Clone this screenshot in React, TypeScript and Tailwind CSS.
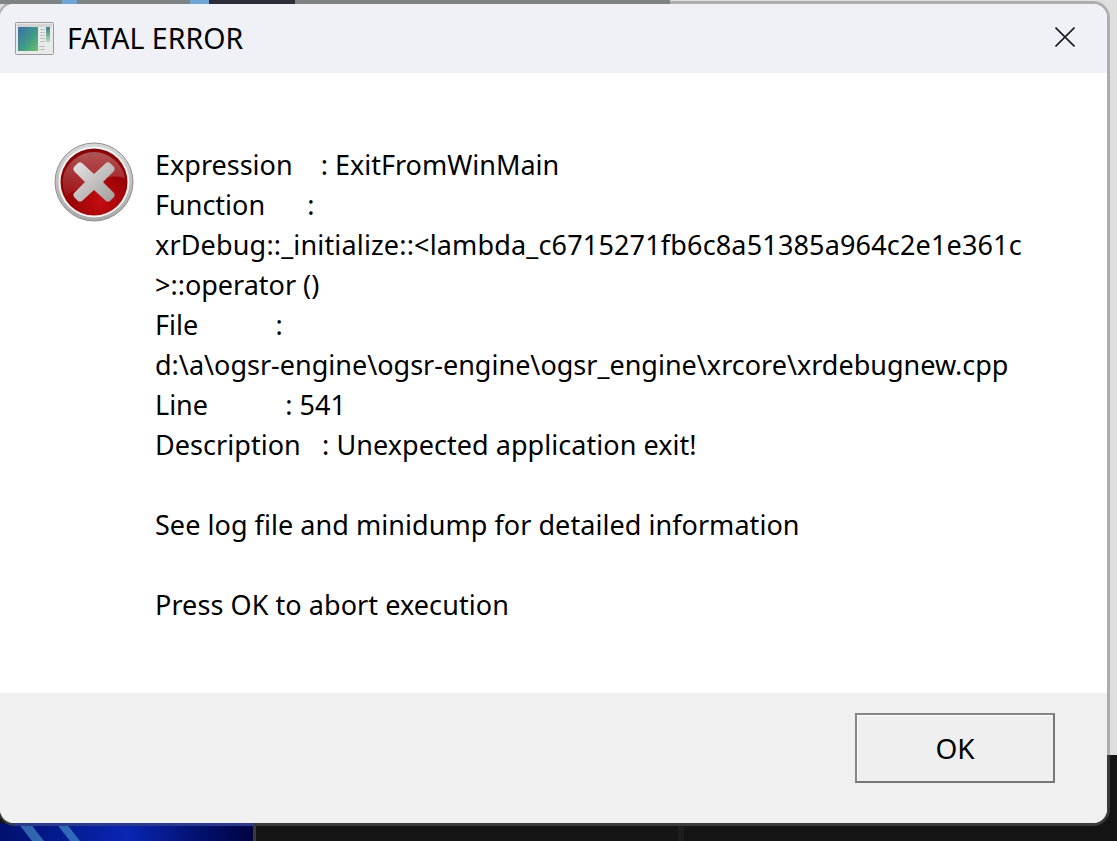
const messageLines = [
  { text: 'Expression    : ExitFromWinMain', className: '' },
  { text: 'Function      :', className: '' },
  { text: 'xrDebug::_initialize::<lambda_c6715271fb6c8a51385a964c2e1e361c', className: 'tracking-[0.16px]' },
  { text: '>::operator ()', className: '' },
  { text: 'File           :', className: '' },
  { text: 'd:\\a\\ogsr-engine\\ogsr-engine\\ogsr_engine\\xrcore\\xrdebugnew.cpp', className: '' },
  { text: 'Line           : 541', className: '' },
  { text: 'Description   : Unexpected application exit!', className: 'tracking-[0.05px]' },
  { text: ' ', className: '' },
  { text: 'See log file and minidump for detailed information', className: 'tracking-[0.05px]' },
  { text: ' ', className: '' },
  { text: 'Press OK to abort execution', className: 'tracking-[0.07px]' },
];

function AppIcon() {
  return (
    <svg width="39" height="33" viewBox="0 0 39 33" className="shrink-0">
      <defs>
        <linearGradient id="pane" x1="0" y1="0" x2="1" y2="1">
          <stop offset="0" stopColor="#3d6ea8" />
          <stop offset="0.55" stopColor="#3f9a88" />
          <stop offset="1" stopColor="#6cc06a" />
        </linearGradient>
        <linearGradient id="strip" x1="0" y1="0" x2="0" y2="1">
          <stop offset="0" stopColor="#3a7a90" />
          <stop offset="1" stopColor="#b4dcb0" />
        </linearGradient>
      </defs>
      <rect x="0.5" y="0.5" width="38" height="32" rx="1" fill="#e9e9e9" stroke="#9a9a9a" />
      <rect x="2" y="2" width="35" height="3" fill="#d2d2d2" />
      <rect x="3" y="5" width="20" height="24" fill="url(#pane)" />
      <rect x="31" y="5" width="4" height="15" fill="url(#strip)" />
      <g fill="#bdbdbd">
        <rect x="25" y="7" width="5" height="1" />
        <rect x="25" y="10" width="5" height="1" />
        <rect x="25" y="13" width="5" height="1" />
        <rect x="25" y="16" width="5" height="1" />
        <rect x="25" y="19" width="5" height="1" />
        <rect x="24" y="24" width="6" height="1" />
        <rect x="24" y="27" width="6" height="1" />
      </g>
    </svg>
  );
}

function ErrorIcon() {
  return (
    <svg width="80" height="80" viewBox="0 0 80 80" className="shrink-0">
      <defs>
        <linearGradient id="ring" x1="0" y1="0" x2="0" y2="1">
          <stop offset="0" stopColor="#d8d8d8" />
          <stop offset="1" stopColor="#a8a8a8" />
        </linearGradient>
        <radialGradient id="disc" cx="0.6" cy="0.8" r="0.8">
          <stop offset="0" stopColor="#c40d10" />
          <stop offset="0.55" stopColor="#9a0307" />
          <stop offset="1" stopColor="#860406" />
        </radialGradient>
        <linearGradient id="shine" x1="0" y1="0" x2="0" y2="1">
          <stop offset="0" stopColor="#ffffff" stopOpacity="0.32" />
          <stop offset="1" stopColor="#ffffff" stopOpacity="0.06" />
        </linearGradient>
        <linearGradient id="cross" x1="0" y1="0" x2="1" y2="1">
          <stop offset="0" stopColor="#e6e3e3" />
          <stop offset="1" stopColor="#a39d9d" />
        </linearGradient>
      </defs>
      <circle cx="40" cy="40" r="39" fill="url(#ring)" stroke="#8e8e8e" strokeWidth="1" />
      <circle cx="40" cy="40" r="35.5" fill="#f4f4f4" />
      <circle cx="40" cy="40" r="33.5" fill="url(#disc)" />
      <path d="M9 36 A31.5 31.5 0 0 1 71 36 C56 30 28 42 12 54 A31.5 31.5 0 0 1 9 36 Z" fill="url(#shine)" />
      <path
        d="M28 21 L40 32 L52 21 Q54 19.5 56 21 L60 25 Q61.5 27 60 29 L49 40 L60 51 Q61.5 53 60 55 L56 59 Q54 60.5 52 59 L40 48 L28 59 Q26 60.5 24 59 L20 55 Q18.5 53 20 51 L31 40 L20 29 Q18.5 27 20 25 L24 21 Q26 19.5 28 21 Z"
        fill="url(#cross)"
      />
    </svg>
  );
}

function Desktop() {
  return (
    <div className="absolute inset-0 flex flex-col">
      <div className="h-[755px] bg-[#dfdfdf]" />
      <div className="flex flex-1 flex-col justify-end bg-[#141414]">
        <div className="flex h-[18px]">
          <div className="h-full w-[253px] bg-linear-to-r from-[#00106e] via-[#0a26b4] to-[#010440]">
            <svg width="253" height="18" viewBox="0 0 253 18">
              <path d="M18 0 L30 0 L44 18 L32 18 Z M56 0 L66 0 L80 18 L70 18 Z" fill="#4f9ccf" opacity="0.6" />
            </svg>
          </div>
          <div className="h-full w-[3px] bg-[#3a3a3a]" />
          <div className="h-full w-[422px]" />
          <div className="h-full w-[6px] bg-[#1d1d1d]" />
        </div>
      </div>
    </div>
  );
}

export default function App() {
  return (
    <div className="relative h-[841px] w-[1117px] overflow-hidden bg-[#141414] font-['Noto_Sans',sans-serif] text-black">
      <Desktop />

      <div className="absolute left-[-2px] top-[1px] h-[825px] w-[1112px] rounded-[17px] bg-[linear-gradient(#adadad_754px,#3a3a3a_754px)] pb-[3px] pl-[2px] pr-[3px] pt-[3px]">
        <div className="flex h-full flex-col overflow-hidden rounded-[14px] bg-white">
          <div className="flex h-[69px] shrink-0 items-center justify-between bg-[#f0f1f7] pl-[15px] pr-[32px]">
            <div className="flex items-center gap-[13px]">
              <AppIcon />
              <span className="text-[28.5px] leading-none">FATAL ERROR</span>
            </div>
            <svg width="20" height="20" viewBox="0 0 20 20" className="mb-[3px]">
              <path d="M0.5 0.5 L19.5 19.5 M19.5 0.5 L0.5 19.5" stroke="#1a1a1a" strokeWidth="1.6" fill="none" />
            </svg>
          </div>

          <div className="flex h-[620px] shrink-0 gap-[21px] pl-[54px] pt-[69px]">
            <ErrorIcon />
            <div className="mt-[3px] whitespace-pre text-[27px] leading-[40px]">
              {messageLines.map((line, i) => (
                <div key={i} className={line.className}>
                  {line.text}
                </div>
              ))}
            </div>
          </div>

          <div className="flex flex-1 justify-end bg-[#f0f0f0] pr-[52px] pt-[20px]">
            <button className="h-[70px] w-[200px] border-2 border-[#777777] border-l-[#858585] border-t-[#858585] bg-[#efefef] text-[28px] shadow-[inset_1px_1px_0_#ffffff]">
              OK
            </button>
          </div>
        </div>
      </div>

      {/* desktop strip that sits over the window's top edge */}
      <div className="absolute left-0 top-0 flex h-[4px] w-[670px] bg-[#7e8483]">
        <div className="w-[62px]" />
        <div className="w-[15px] bg-[#6fa6d6]" />
        <div className="w-[113px]" />
        <div className="w-[19px] bg-[#6fa6d6]" />
        <div className="w-[86px] bg-[#2e2d3a]" />
      </div>
      {/* window edge tinted by the wallpaper */}
      <div className="absolute left-[14px] top-[823px] h-[3px] w-[239px] bg-[#2c3a8c]" />
    </div>
  );
}
